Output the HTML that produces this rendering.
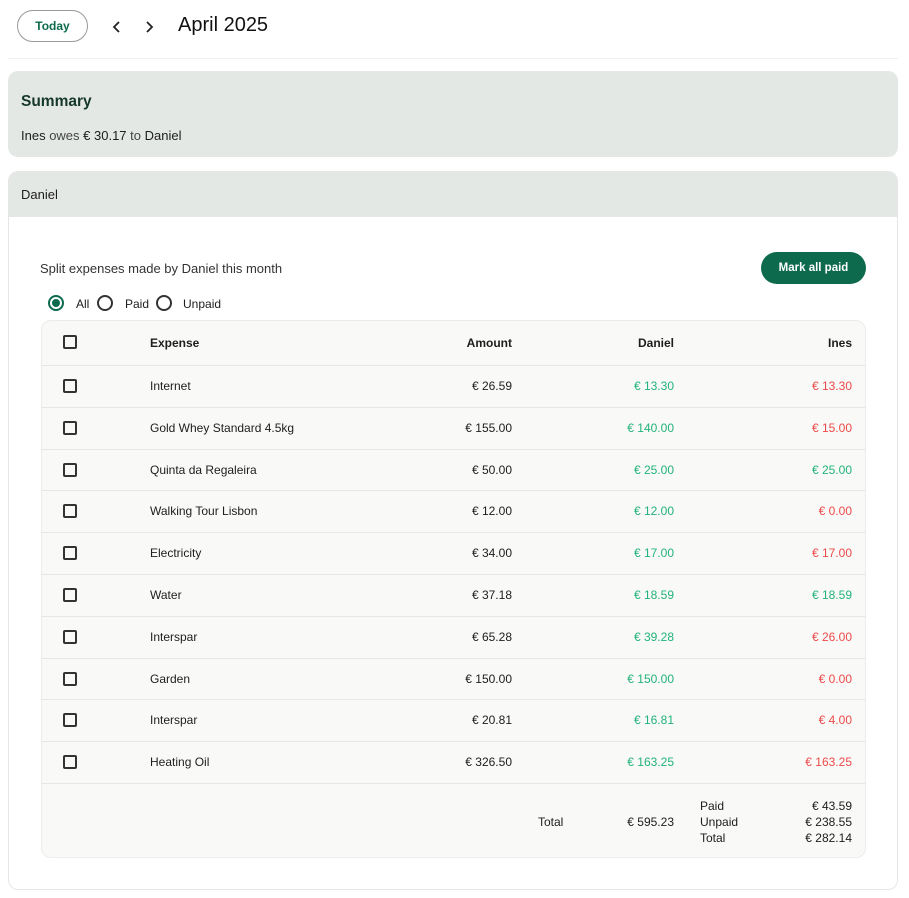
<!DOCTYPE html>
<html><head><meta charset="utf-8"><style>
*{box-sizing:border-box;margin:0;padding:0}
body{width:909px;height:898px;background:#fff;font-family:"Liberation Sans",sans-serif;color:#1d1d1d;position:relative;overflow:hidden;font-size:12px}
.a{position:absolute;white-space:nowrap}
.r{text-align:right}
.cb{position:absolute;left:63px;width:14px;height:14px;border:2px solid #333;border-radius:2px}
.g{color:#22b27c}.rd{color:#ec4a4a}
.row{position:absolute;left:41px;width:824px;height:42px;border-top:1px solid #e6e6e3}
.btn{display:flex;align-items:center;justify-content:center}
</style></head><body>
<div class="a btn" style="left:17px;top:10px;width:71px;height:32px;border:1px solid #999;border-radius:16px;color:#0e6a4d;font-weight:bold;font-size:12px">Today</div>
<svg class="a" style="left:111px;top:20px" width="12" height="14" viewBox="0 0 12 14"><path d="M8 2 L3 7 L8 12" fill="none" stroke="#222" stroke-width="1.8"/></svg>
<svg class="a" style="left:143px;top:20px" width="12" height="14" viewBox="0 0 12 14"><path d="M4 2 L9 7 L4 12" fill="none" stroke="#222" stroke-width="1.8"/></svg>
<div class="a" style="left:178px;top:14px;font-size:20px;color:#111">April 2025</div>
<div class="a" style="left:8px;top:58px;width:890px;height:1px;background:#f0f0f0"></div>
<div class="a" style="left:8px;top:71px;width:890px;height:86px;background:#e4e8e5;border-radius:10px"></div>
<div class="a" style="left:21px;top:93px;font-size:15.5px;font-weight:bold;color:#16382a">Summary</div>
<div class="a" style="left:21px;top:128px;font-size:13px">Ines <span style="color:#444">owes</span> € 30.17 <span style="color:#444">to</span> Daniel</div>
<div class="a" style="left:8px;top:171px;width:890px;height:719px;border:1px solid #e6e6e6;border-radius:10px;overflow:hidden"><div style="height:45px;background:#e4e8e5"></div></div>
<div class="a" style="left:21px;top:187px;font-size:13px">Daniel</div>
<div class="a" style="left:40px;top:261px;font-size:13px;color:#333">Split expenses made by Daniel this month</div>
<div class="a btn" style="left:761px;top:252px;width:105px;height:32px;background:#0e6a4d;border-radius:16px;color:#fff;font-weight:bold;font-size:11.5px">Mark all paid</div>
<div class="a" style="left:48px;top:295px;width:16px;height:16px;border:2px solid #0e6a4d;border-radius:50%"><div style="margin:2px;width:8px;height:8px;border-radius:50%;background:#0e6a4d"></div></div>
<div class="a" style="left:76px;top:297px">All</div>
<div class="a" style="left:97px;top:295px;width:16px;height:16px;border:2px solid #333;border-radius:50%"></div>
<div class="a" style="left:125px;top:297px">Paid</div>
<div class="a" style="left:156px;top:295px;width:16px;height:16px;border:2px solid #333;border-radius:50%"></div>
<div class="a" style="left:183px;top:297px">Unpaid</div>
<div class="a" style="left:41px;top:320px;width:825px;height:538px;background:#f9f9f7;border:1px solid #ececea;border-radius:10px"></div>
<div class="cb" style="top:335px"></div>
<div class="a" style="left:150px;top:336px;font-weight:bold">Expense</div>
<div class="a r" style="left:412px;width:100px;top:336px;font-weight:bold">Amount</div>
<div class="a r" style="left:574px;width:100px;top:336px;font-weight:bold">Daniel</div>
<div class="a r" style="left:752px;width:100px;top:336px;font-weight:bold">Ines</div>
<div id="rows"></div>
<script>
var d=[["Internet","26.59","13.30","13.30",0],["Gold Whey Standard 4.5kg","155.00","140.00","15.00",0],["Quinta da Regaleira","50.00","25.00","25.00",1],["Walking Tour Lisbon","12.00","12.00","0.00",0],["Electricity","34.00","17.00","17.00",0],["Water","37.18","18.59","18.59",1],["Interspar","65.28","39.28","26.00",0],["Garden","150.00","150.00","0.00",0],["Interspar","20.81","16.81","4.00",0],["Heating Oil","326.50","163.25","163.25",0]];
var h="";d.forEach(function(r,i){var t=365+i*41.8;
h+='<div class="row" style="top:'+t+'px"></div><div class="cb" style="top:'+(t+14)+'px"></div>'+
'<div class="a" style="left:150px;top:'+(t+14)+'px">'+r[0]+'</div>'+
'<div class="a r" style="left:412px;width:100px;top:'+(t+14)+'px">€ '+r[1]+'</div>'+
'<div class="a r g" style="left:574px;width:100px;top:'+(t+14)+'px">€ '+r[2]+'</div>'+
'<div class="a r '+(r[4]?'g':'rd')+'" style="left:752px;width:100px;top:'+(t+14)+'px">€ '+r[3]+'</div>';});
h+='<div class="row" style="top:783px"></div>';
document.getElementById("rows").innerHTML=h;
</script>
<div class="a" style="left:538px;top:815px">Total</div>
<div class="a r" style="left:574px;width:100px;top:815px">€ 595.23</div>
<div class="a" style="left:700px;top:798px;line-height:16px">Paid<br>Unpaid<br>Total</div>
<div class="a r" style="left:752px;width:100px;top:798px;line-height:16px">€ 43.59<br>€ 238.55<br>€ 282.14</div>
</body></html>
